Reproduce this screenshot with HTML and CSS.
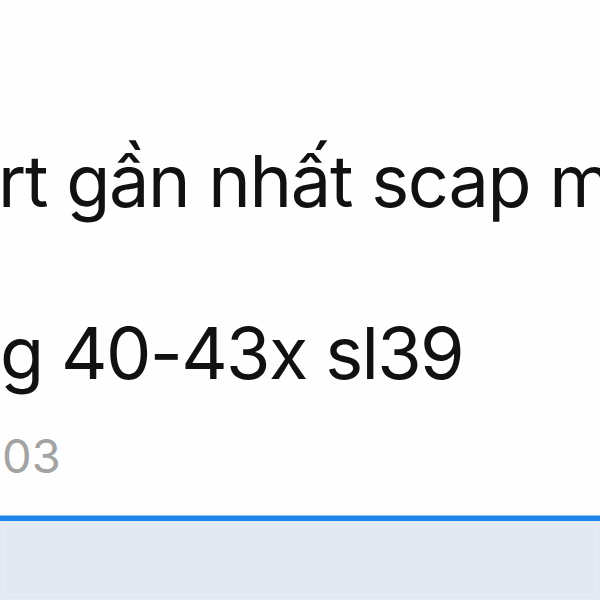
FILE: index.html
```html
<!DOCTYPE html>
<html lang="vi">
<head>
<meta charset="utf-8">
<title>Tin nhắn</title>
<link rel="stylesheet" href="styles.css">
</head>
<body>
<main class="thread">
  <div class="bubble">
    <p class="line line-first">rt gần nhất scap mới</p>
    <p class="line line-second">g 40-43x sl39</p>
    <p class="time">03</p>
  </div>
</main>
<footer class="composer">
  <div class="field"></div>
</footer>
</body>
</html>
```
FILE: styles.css
```css
html, body {
  margin: 0;
  padding: 0;
}
body {
  width: 600px;
  height: 600px;
  overflow: hidden;
  background: #fefefe;
  font-family: Inter, "Noto Sans", sans-serif;
  display: flex;
  flex-direction: column;
}
.thread {
  height: 516px;
  overflow: hidden;
  flex: none;
}
.bubble {
  padding-top: 145px;
  padding-left: 0;
}
.line {
  margin: 0 0 0 -2px;
  font-size: 72px;
  line-height: 72px;
  color: #111111;
  white-space: nowrap;
  letter-spacing: -1.3px;
}
.line-second {
  margin: 100px 0 0 0;
  letter-spacing: -1.65px;
}
.time {
  margin: 43px 0 0 2px;
  font-size: 47px;
  line-height: 47px;
  color: #a3a3a3;
}
.composer {
  flex: 1;
  border-top: 5px solid #1e86e6;
  box-shadow: 0 -1px 0 #8cc4f3;
  background: #e2e9f2;
  padding: 3px 3px 5px 3px;
  display: flex;
}
.field {
  flex: 1;
  border: 1px solid #e9eef5;
  border-top: none;
}
```
